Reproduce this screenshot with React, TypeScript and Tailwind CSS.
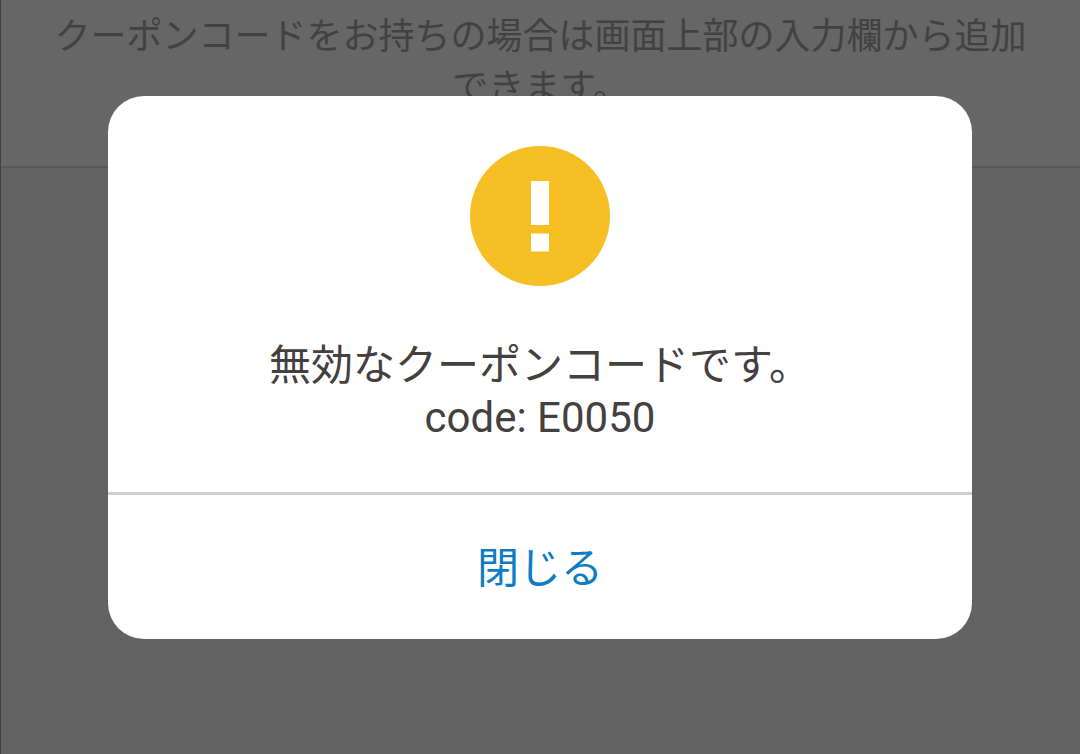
function CouponNotice() {
  return (
    <section className="border-b-2 border-[#575757] bg-[#666666] px-12 pt-3 pb-13 text-center">
      <p className="text-4xl leading-[51px] text-[#424242]">
        クーポンコードをお持ちの場合は画面上部の入力欄から追加できます。
      </p>
    </section>
  );
}

function WarningIcon() {
  return (
    <svg
      viewBox="0 0 140 140"
      className="size-35"
      fill="none"
      aria-hidden="true"
    >
      <circle cx="70" cy="70" r="70" fill="#f5be23" />
      <path d="M61 35h18v44H61zM61 87.5h18v18H61z" fill="#fff" />
    </svg>
  );
}

function ErrorDialog() {
  return (
    <div
      role="alertdialog"
      aria-modal="true"
      aria-labelledby="error-message"
      className="w-4/5 overflow-hidden rounded-[36px] bg-white"
    >
      <div className="flex flex-col items-center px-12 pt-[50px] pb-12">
        <WarningIcon />
        <p
          id="error-message"
          className="mt-[54px] text-center text-[42px] leading-[52px] text-[#44403f]"
        >
          無効なクーポンコードです。
          <br />
          code: E0050
        </p>
      </div>
      <button
        type="button"
        className="block w-full border-t-3 border-[#d0d0d0] pt-12 pb-11 text-[42px] leading-[52px] text-[#0d7cc4]"
      >
        閉じる
      </button>
    </div>
  );
}

export default function App() {
  return (
    <div className="font-[Roboto,'Noto_Sans_CJK_JP',sans-serif]">
      <main className="min-h-screen border-l border-[#404040] bg-[#626262]">
        <CouponNotice />
      </main>
      <div className="fixed inset-0 flex items-start justify-center pt-24">
        <ErrorDialog />
      </div>
    </div>
  );
}
